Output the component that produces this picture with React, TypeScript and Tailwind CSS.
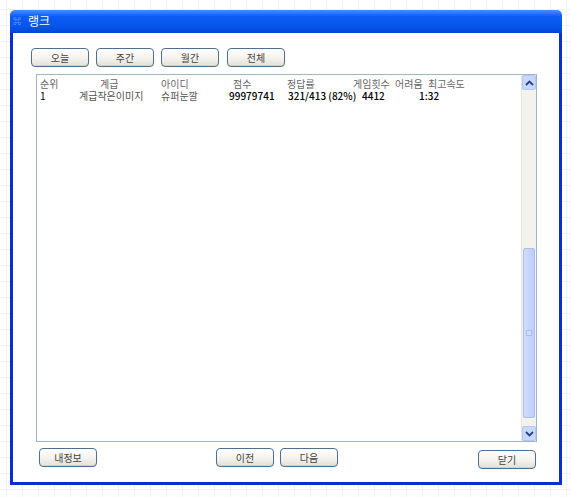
import React from "react"

const tabs = ["오늘", "주간", "월간", "전체"]

function Btn({ label, className = "" }: { label: string; className?: string }) {
  return (
    <button
      className={`h-[19px] w-[58px] rounded-[4px] border border-[#4f6f8f] bg-[linear-gradient(to_bottom,#ffffff,#f3f2ed_55%,#e2e0d6)] text-[10px] leading-none text-[#444] shadow-[inset_0_-1px_0_#d6d3c7] ${className}`}
    >
      {label}
    </button>
  )
}

function Chevron({ up }: { up?: boolean }) {
  return (
    <svg width="9" height="6" viewBox="0 0 9 6">
      <path
        d={up ? "M1 5 L4.5 1.5 L8 5" : "M1 1 L4.5 4.5 L8 1"}
        fill="none"
        stroke="#2a3f8f"
        strokeWidth="1.8"
      />
    </svg>
  )
}

function Scrollbar() {
  return (
    <div className="flex w-[15px] flex-col bg-[#f3f2ec] border-l border-[#e8e6dc]">
      <div className="flex h-[15px] items-center justify-center rounded-[2px] border border-[#b3c6f4] bg-[#c8d8fc]">
        <Chevron up />
      </div>
      <div className="h-[158px]" />
      <div className="relative flex-1 rounded-[2px] border border-[#a9bdf3] bg-[linear-gradient(to_right,#d0ddfd,#bccffb)] mx-[1px]">
        <div className="absolute left-1/2 top-1/2 h-[6px] w-[6px] -translate-x-1/2 -translate-y-1/2 border border-[#a9bdf3] bg-[#cfdcfd]" />
      </div>
      <div className="h-[8px]" />
      <div className="flex h-[15px] items-center justify-center rounded-[2px] border border-[#b3c6f4] bg-[#c8d8fc]">
        <Chevron />
      </div>
    </div>
  )
}

export default function App() {
  return (
    <div
      className="h-[497px] w-[571px] overflow-hidden bg-white bg-[linear-gradient(to_right,#f1f1f1_1px,transparent_1px),linear-gradient(to_bottom,#f1f1f1_1px,transparent_1px)] bg-[size:16px_16px] bg-[position:6px_9px] pl-[10px] pt-[10px]"
      style={{ fontFamily: '"Noto Sans CJK KR", "Liberation Sans", sans-serif' }}
    >
      <div className="flex h-[475px] w-[552px] flex-col">
        {/* title bar */}
        <div className="flex h-[23px] items-center rounded-t-[5px] border-b border-[#0a3fd0] bg-[linear-gradient(to_bottom,#4a8eff,#0c5cf4_30%,#0656ec_75%,#0648d8)] pl-[3px]">
          <span className="w-[10px] text-[8px] leading-none text-[#a8b8ff]">⌘</span>
          <span className="ml-[5px] text-[12px] leading-none text-white">랭크</span>
        </div>
        {/* body */}
        <div className="flex flex-1 flex-col border-x-[3px] border-b-[3px] border-[#0a2ed0] bg-white">
          <div className="flex gap-[7px] pl-[18px] pt-[15px]">
            {tabs.map((t, i) => (
              <Btn key={t} label={t} className={i === 3 ? "ml-[1px]" : ""} />
            ))}
          </div>
          <div className="ml-[23px] mt-[7px] flex h-[368px] w-[501px] border border-[#9fb3c9]">
            <div className="flex-1 pl-[3px] pt-[3px] text-[10px] leading-[12px]">
              <div className="flex text-[#666]">
                <span className="w-[60px]">순위</span>
                <span className="w-[61px]">계급</span>
                <span className="w-[72px]">아이디</span>
                <span className="w-[54px]">점수</span>
                <span className="w-[66px]">정답률</span>
                <span className="w-[42px]">게임횟수</span>
                <span className="w-[33px]">어려움</span>
                <span>최고속도</span>
              </div>
              <div className="flex text-black">
                <span className="w-[39px]">1</span>
                <span className="w-[82px] text-[#555]">계급작은이미지</span>
                <span className="w-[68px] text-[#555]">슈퍼눈깔</span>
                <span className="w-[59px] font-medium">99979741</span>
                <span className="w-[74px] font-medium">321/413 (82%)</span>
                <span className="w-[57px] font-medium">4412</span>
                <span className="font-medium">1:32</span>
              </div>
            </div>
            <Scrollbar />
          </div>
          <div className="flex items-start pl-[26px] pt-[6px]">
            <Btn label="내정보" />
            <Btn label="이전" className="ml-[119px]" />
            <Btn label="다음" className="ml-[6px]" />
            <Btn label="닫기" className="ml-[140px] mt-[2px]" />
          </div>
        </div>
      </div>
    </div>
  )
}
